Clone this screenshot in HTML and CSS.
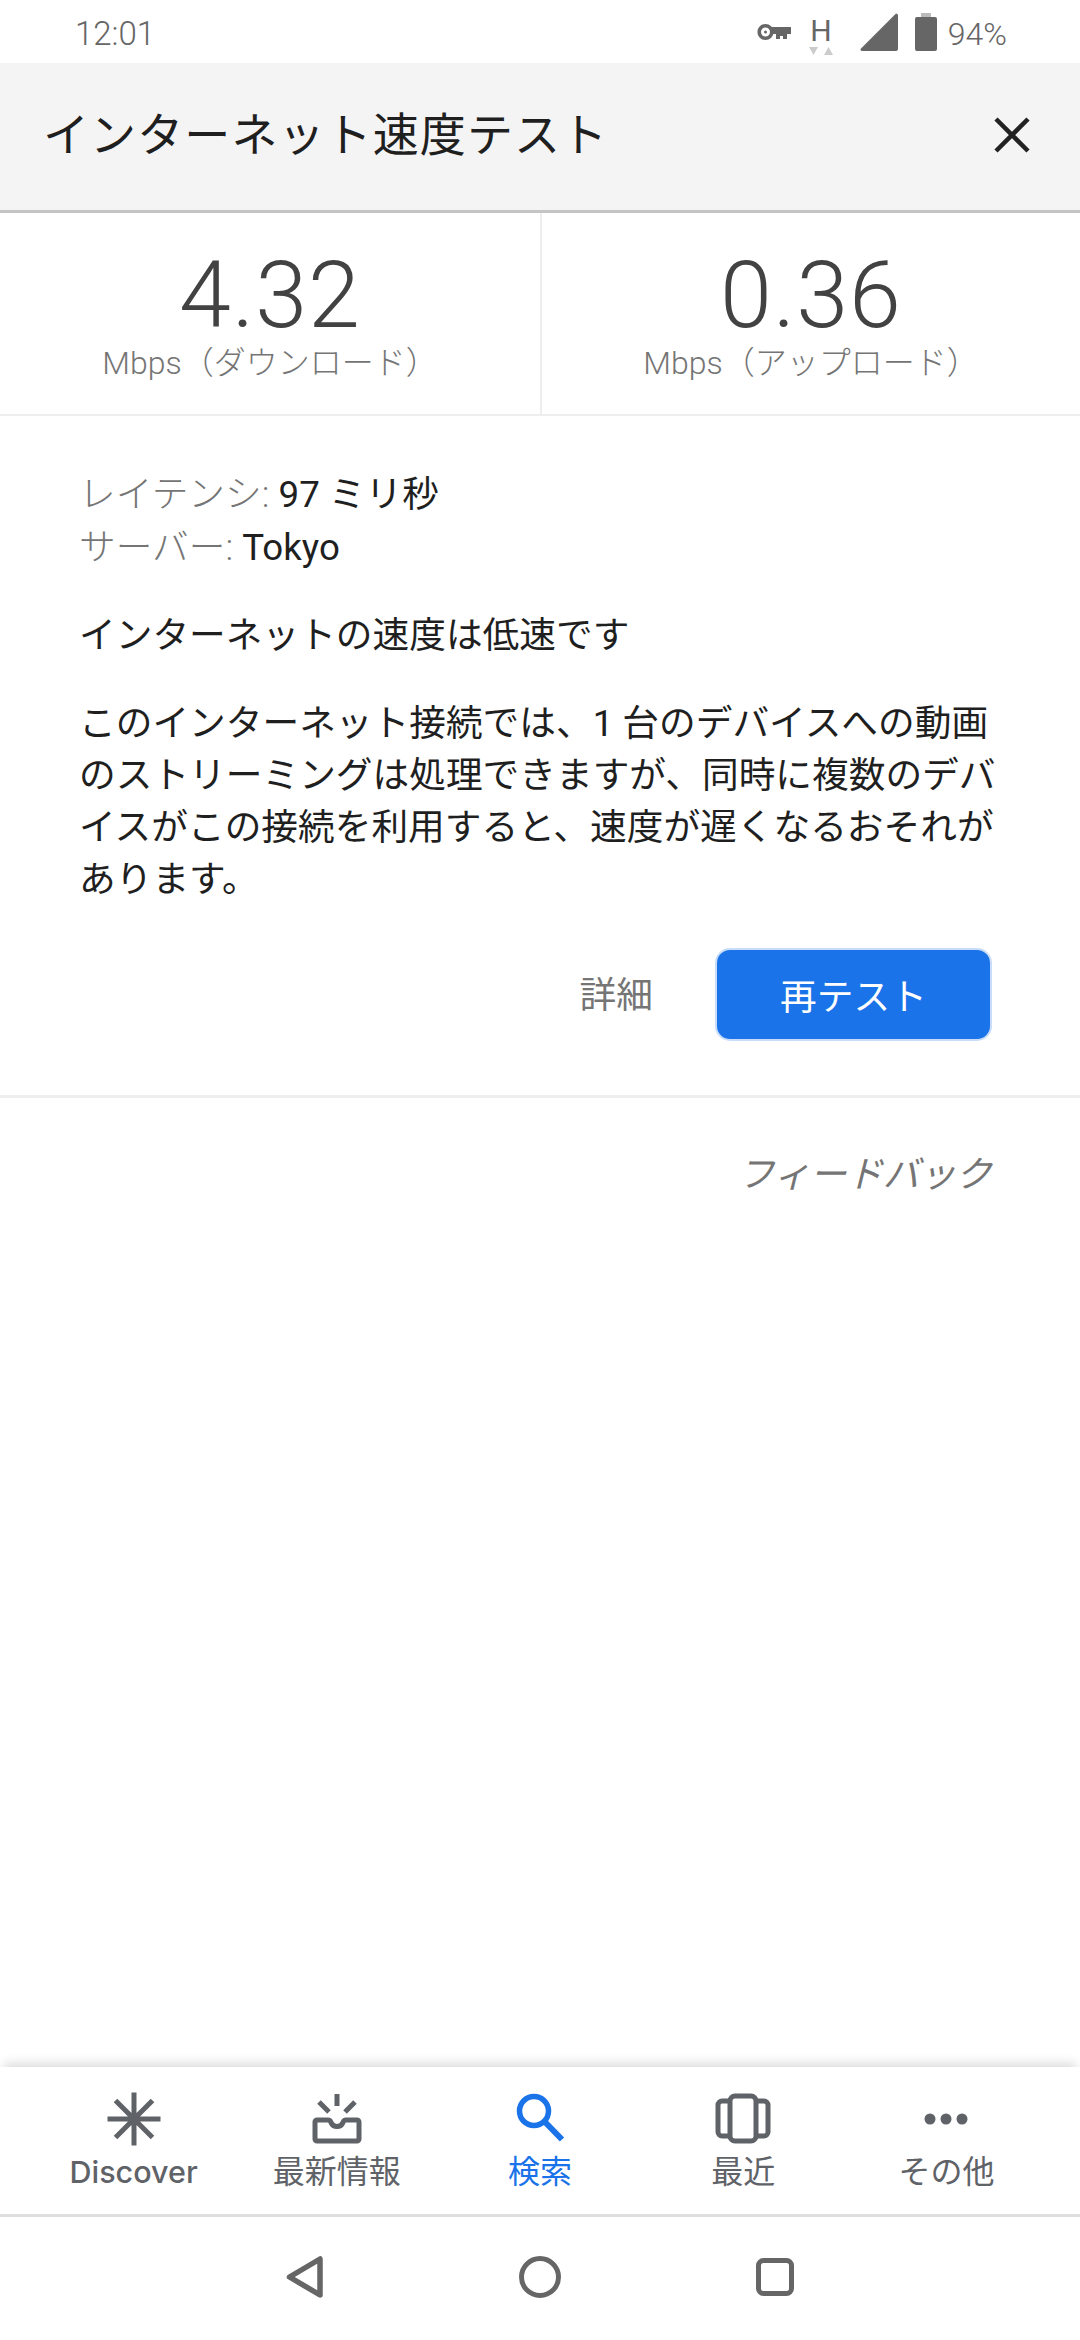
FILE: index.html
```html
<!DOCTYPE html>
<html lang="ja">
	<head>
		<meta charset="UTF-8" />
		<meta name="viewport" content="width=device-width, initial-scale=1.0" />
		<title>インターネット速度テスト</title>
		<link rel="stylesheet" href="styles.css">
	</head>
	<body>
		<div class="status-bar">
			<span class="clock">12:01</span>
			<div class="status-icons">
				<svg class="icon-key" width="34" height="18" viewBox="0 0 34 18"><circle cx="8.500" cy="9" r="6.300" fill="none" stroke="#666" stroke-width="3.600"/><path d="M14 4h20v7h-4v5h-4v-3h-3v3h-4v-5h-5z" fill="#666"/><circle cx="8.500" cy="9" r="1.500" fill="#666"/></svg>
				<div class="net-type">
					<span class="net-letter">H</span>
					<svg width="24" height="8" viewBox="0 0 24 8"><path d="M0 0h9L4.500 8z" fill="#ccc"/><path d="M15 8h9L19.500 0z" fill="#ccc"/></svg>
				</div>
				<svg class="icon-signal" width="38" height="38" viewBox="0 0 38 38"><path d="M36 0.500a2 2 0 0 1 2 2V36a2 2 0 0 1-2 2H2a1.500 1.500 0 0 1-1-2.600z" fill="#666"/></svg>
				<svg class="icon-battery" width="22" height="38" viewBox="0 0 22 38"><rect x="6" y="0" width="10" height="5" fill="#bbb"/><rect x="0" y="4" width="22" height="34" rx="2" fill="#666"/></svg>
				<span class="battery-text">94%</span>
			</div>
		</div>

		<header class="title-bar">
			<h1>インターネット速度テスト</h1>
			<svg class="close" width="36" height="36" viewBox="0 0 36 36"><path d="M2 2l32 32M34 2L2 34" stroke="#222" stroke-width="4.500" fill="none"/></svg>
		</header>

		<section class="speeds">
			<div class="speed speed-down">
				<div class="speed-value">4.32</div>
				<div class="speed-label">Mbps（ダウンロード）</div>
			</div>
			<div class="speed">
				<div class="speed-value">0.36</div>
				<div class="speed-label">Mbps（アップロード）</div>
			</div>
		</section>

		<section class="result">
			<div class="meta">
				<div><span class="meta-key">レイテンシ:</span> 97 ミリ秒</div>
				<div><span class="meta-key">サーバー:</span> Tokyo</div>
			</div>
			<p class="headline">インターネットの速度は低速です</p>
			<p class="desc">このインターネット接続では、1 台のデバイスへの動画のストリーミングは処理できますが、同時に複数のデバイスがこの接続を利用すると、速度が遅くなるおそれがあります。</p>
			<div class="actions">
				<span class="more">詳細</span>
				<button type="button" class="retest">再テスト</button>
			</div>
		</section>

		<div class="feedback">フィードバック</div>

		<nav class="tabs">
			<div class="tab">
				<svg width="56" height="56" viewBox="0 0 56 56"><path d="M28 1.500v53M1.500 28h53M9.500 9.500l37 37M46.500 9.500l-37 37" stroke="#5f6368" stroke-width="5" fill="none"/><circle cx="28" cy="28" r="6" fill="#5f6368"/></svg>
				<span class="tab-label tab-latin">Discover</span>
			</div>
			<div class="tab">
				<svg width="56" height="56" viewBox="0 0 56 56"><path d="M6 31a2 2 0 0 1 2-2h11c1.500 0 2.500 1 3 2.500 1 2.500 3.500 4 6 4s5-1.500 6-4c.5-1.500 1.500-2.500 3-2.500h11a2 2 0 0 1 2 2v17a2 2 0 0 1-2 2H8a2 2 0 0 1-2-2z" fill="none" stroke="#5f6368" stroke-width="5"/><path d="M28 3v12M10 11l10 10M46 11L36 21" stroke="#5f6368" stroke-width="5" fill="none"/></svg>
				<span class="tab-label">最新情報</span>
			</div>
			<div class="tab tab-active">
				<svg width="56" height="56" viewBox="0 0 56 56"><circle cx="22" cy="20" r="14.500" fill="none" stroke="#1a73e8" stroke-width="5.500"/><path d="M32.500 30.500L50 48.500" stroke="#1a73e8" stroke-width="6" fill="none"/></svg>
				<span class="tab-label">検索</span>
			</div>
			<div class="tab">
				<svg width="56" height="56" viewBox="0 0 56 56"><rect x="15" y="5" width="26" height="45" rx="5" fill="none" stroke="#5f6368" stroke-width="5"/><path d="M15 10H7a4 4 0 0 0-4 4v27a4 4 0 0 0 4 4h8M41 10h8a4 4 0 0 1 4 4v27a4 4 0 0 1-4 4h-8" fill="none" stroke="#5f6368" stroke-width="5"/></svg>
				<span class="tab-label">最近</span>
			</div>
			<div class="tab">
				<svg width="56" height="56" viewBox="0 0 56 56"><circle cx="12" cy="28" r="5.500" fill="#5f6368"/><circle cx="28" cy="28" r="5.500" fill="#5f6368"/><circle cx="44" cy="28" r="5.500" fill="#5f6368"/></svg>
				<span class="tab-label">その他</span>
			</div>
		</nav>

		<div class="sys-nav">
			<svg width="38" height="42" viewBox="0 0 38 42"><path d="M3.500 21L34 3v36z" fill="none" stroke="#666" stroke-width="5.500" stroke-linejoin="round"/></svg>
			<svg width="42" height="42" viewBox="0 0 42 42"><circle cx="21" cy="21" r="18.500" fill="none" stroke="#666" stroke-width="5"/></svg>
			<svg width="38" height="38" viewBox="0 0 38 38"><rect x="2.500" y="2.500" width="33" height="33" rx="5" fill="none" stroke="#666" stroke-width="5"/></svg>
		</div>
	</body>
</html>
```

FILE: styles.css
```css
* {
	box-sizing: border-box;
}
body {
	margin: 0;
	height: 2340px;
	display: flex;
	flex-direction: column;
	background-color: #fff;
	color: #1f1f1f;
	font-family: Roboto, "Noto Sans CJK JP", sans-serif;
	font-size: 36.7px;
	overflow: hidden;
}

.status-bar {
	height: 63px;
	padding: 0 73px 0 75px;
	display: flex;
	align-items: center;
	justify-content: space-between;
	color: #666;
	font-size: 32px;
	font-weight: 300;
}
.clock {
	font-size: 33px;
	padding-top: 3px;
}
.status-icons {
	display: flex;
	align-items: center;
}
.icon-key {
	margin-right: 17px;
	margin-top: 1px;
}
.net-type {
	width: 26px;
	display: flex;
	flex-direction: column;
	align-items: center;
	margin-right: 26px;
	margin-top: 6px;
}
.net-type svg {
	flex: none;
}
.net-letter {
	font-size: 30px;
	line-height: 32px;
	font-weight: 400;
}
.icon-signal {
	margin-right: 17px;
	margin-top: 1px;
}
.icon-battery {
	margin-right: 11px;
}
.battery-text {
	padding-top: 4px;
}

.title-bar {
	height: 150px;
	padding: 0 50px 4px 43px;
	display: flex;
	align-items: center;
	justify-content: space-between;
	background-color: #f4f4f4;
	border-bottom: 3px solid #c4c4c4;
}
.title-bar h1 {
	margin: 0;
	font-size: 46px;
	font-weight: 400;
	letter-spacing: 1.1px;
	line-height: 1;
}

.speeds {
	height: 203px;
	display: grid;
	grid-template-columns: 542px 1fr;
	border-bottom: 2px solid #eee;
}
.speed {
	text-align: center;
	padding-top: 34px;
}
.speed-down {
	border-right: 2px solid #eee;
}
.speed-value {
	font-size: 93.5px;
	font-weight: 300;
	letter-spacing: 1px;
	line-height: 96px;
	color: #424242;
}
.speed-label {
	font-size: 32px;
	font-weight: 300;
	line-height: 40px;
	color: #757575;
}

.result {
	height: 682px;
	padding: 52px 75px 0 79px;
	border-bottom: 3px solid #eee;
}
.meta {
	line-height: 53px;
}
.meta-key {
	color: #757575;
	font-weight: 300;
}
.headline {
	margin: 36px 0 0;
	line-height: 52px;
}
.desc {
	margin: 36px 0 0;
	line-height: 52px;
}
.actions {
	margin-top: 42px;
	margin-right: 13px;
	display: flex;
	align-items: center;
	justify-content: flex-end;
}
.more {
	color: #757575;
	margin-right: 62px;
	margin-bottom: 5px;
}
.retest {
	width: 277px;
	height: 93px;
	padding-bottom: 3px;
	background-color: #1a73e8;
	border: 2px solid #c9ddfa;
	border-radius: 15px;
	color: #fff;
	font-family: inherit;
	font-size: 36.7px;
}

.feedback {
	flex: 1;
	padding: 51px 88px 0 0;
	text-align: right;
	font-style: italic;
	font-size: 36.400px;
	color: #757575;
	line-height: 52px;
}

.tabs {
	height: 150px;
	padding: 24px 32px 0;
	display: grid;
	grid-template-columns: repeat(5, 1fr);
	box-shadow: 0 -8px 10px -4px rgba(0, 0, 0, 0.14);
	border-bottom: 3px solid #dedede;
	background-color: #fff;
}
.tab {
	display: flex;
	flex-direction: column;
	align-items: center;
	color: #5f6368;
}
.tab-active {
	color: #1a73e8;
}
.tab-label {
	font-size: 32px;
	line-height: 44px;
	margin-top: 3px;
}
.tab-latin {
	font-family: Inter, Roboto, sans-serif;
	font-size: 30.500px;
	font-weight: 500;
}

.sys-nav {
	flex: none;
	height: 123px;
	padding-bottom: 3px;
	display: flex;
	align-items: center;
	justify-content: center;
	gap: 195px;
}
```
